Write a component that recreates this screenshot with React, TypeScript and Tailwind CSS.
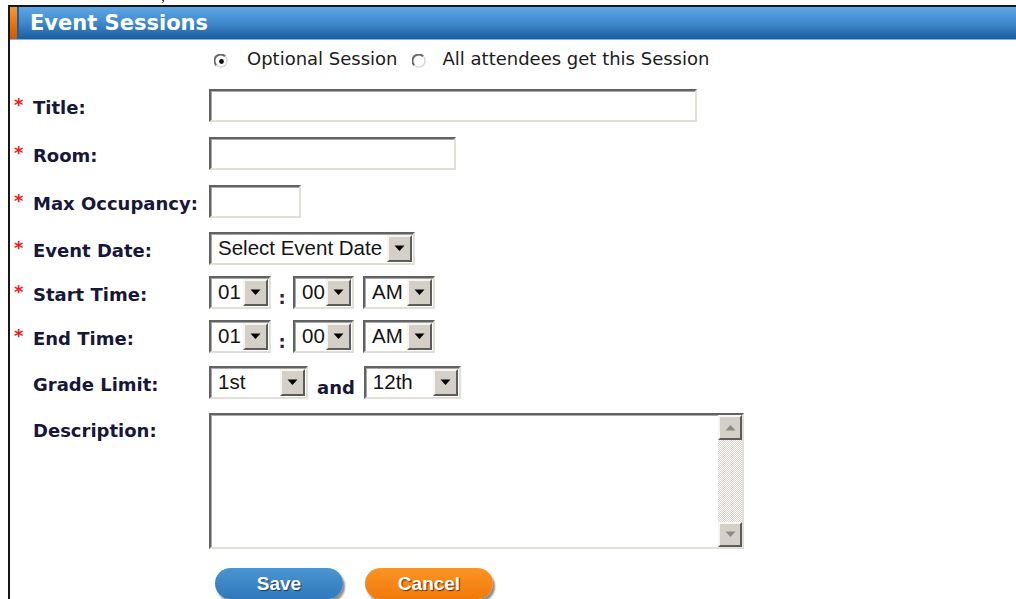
import React from "react";

const labelFont = "font-['DejaVu_Sans','Verdana',sans-serif]";
const inset =
  "border-t-2 border-l-2 border-b-2 border-r-2 border-t-[#626262] border-l-[#626262] border-b-[#e2dfd8] border-r-[#e2dfd8] shadow-[inset_1px_1px_0_#a9a9a9]";
const raised =
  "border-t-2 border-l-2 border-b-2 border-r-2 border-t-[#f6f5f2] border-l-[#f6f5f2] border-b-[#5c5c5c] border-r-[#5c5c5c] bg-[#d4d0c8]";

function Label({ text, required }: { text: string; required?: boolean }) {
  return (
    <div
      className={`w-[199px] shrink-0 pl-[4px] pt-[5px] flex items-center leading-none ${labelFont} font-bold text-[18px] text-[#17173a]`}
    >
      <span className="w-[19px] text-[#ff1414] -translate-y-[3px]">{required ? "*" : ""}</span>
      <span>{text}</span>
    </div>
  );
}

function Arrow({ up, color }: { up?: boolean; color: string }) {
  return (
    <svg width="11" height="7" viewBox="0 0 11 7" className="block">
      {up ? (
        <polygon points="0.5,6.5 10.5,6.5 5.5,1" fill={color} />
      ) : (
        <polygon points="0.5,0.5 10.5,0.5 5.5,6" fill={color} />
      )}
    </svg>
  );
}

function Select({ width, value }: { width: string; value: string }) {
  return (
    <div className={`${width} h-[33px] shrink-0 flex bg-white ${inset}`}>
      <div className="flex-1 pl-[7px] flex items-center font-['Liberation_Sans',Arial,sans-serif] text-[20.5px] leading-none text-[#141414] overflow-hidden whitespace-nowrap">
        {value}
      </div>
      <div className={`w-[25px] shrink-0 my-[1px] mr-[1px] flex items-center justify-center ${raised}`}>
        <Arrow color="#000" />
      </div>
    </div>
  );
}

function TextBox({ width }: { width: string }) {
  return <div className={`${width} h-[33px] shrink-0 bg-white ${inset}`} />;
}

// classic sunken radio: dark upper-left arc, light lower-right arc
function Radio({ checked }: { checked?: boolean }) {
  return (
    <svg width="15" height="15" viewBox="0 0 15 15" className="block shrink-0 mt-[5px]">
      <circle cx="7.5" cy="7.5" r="6" fill="#fff" />
      <path d="M2.3 11.2 A6 6 0 0 1 11.2 2.3" fill="none" stroke="#6a6a6a" strokeWidth="2" />
      <path d="M11.2 2.3 A6 6 0 0 1 2.3 11.2" fill="none" stroke="#d8d8d8" strokeWidth="1.6" />
      {checked && <circle cx="7.5" cy="7.5" r="2.4" fill="#111" />}
    </svg>
  );
}

export default function App() {
  return (
    <div className="w-[1016px] h-[599px] overflow-hidden bg-white">
      {/* tail of the line above the panel, clipped by the panel's top edge */}
      <div className="h-[5px] overflow-hidden pl-[161px]">
        <div className="-mt-[12px] font-['Liberation_Serif',serif] text-[16px] leading-[16px] text-[#222]">,</div>
      </div>

      <div className="ml-[8px] h-[594px] border-l-2 border-t-2 border-[#171717]">
        {/* panel title bar */}
        <div className="h-[33px] flex border-b border-[#7db6e6] bg-gradient-to-b from-[#5fa7e4] via-[#3f89cc] to-[#1a5e9e]">
          <div className="w-[7px] bg-gradient-to-b from-[#f29a38] via-[#e97514] to-[#c95a06]" />
          <div className="w-[2px] bg-[#245f92]" />
          <div className="pl-[11px] flex items-center font-['DejaVu_Sans','Tahoma',sans-serif] font-bold text-[21px] leading-none text-white">
            Event Sessions
          </div>
        </div>

        {/* session type */}
        <div className={`mt-[8px] h-[22px] pl-[204px] flex items-center ${labelFont} text-[18px] leading-none text-[#202020]`}>
          <Radio checked />
          <span className="ml-[18px]">Optional Session</span>
          <div className="ml-[14px]">
            <Radio />
          </div>
          <span className="ml-[16px]">All attendees get this Session</span>
        </div>

        <div className="mt-[19px] flex items-center">
          <Label text="Title:" required />
          <TextBox width="w-[488px]" />
        </div>

        <div className="mt-[15px] flex items-center">
          <Label text="Room:" required />
          <TextBox width="w-[247px]" />
        </div>

        <div className="mt-[15px] flex items-center">
          <Label text="Max Occupancy:" required />
          <TextBox width="w-[92px]" />
        </div>

        <div className="mt-[14px] flex items-center">
          <Label text="Event Date:" required />
          <Select width="w-[206px]" value="Select Event Date" />
        </div>

        <div className="mt-[11px] flex items-center">
          <Label text="Start Time:" required />
          <Select width="w-[62px]" value="01" />
          <span className={`w-[22px] pt-[10px] text-center ${labelFont} font-bold text-[18px] leading-none text-[#3a1a40]`}>:</span>
          <Select width="w-[61px]" value="00" />
          <div className="w-[9px]" />
          <Select width="w-[72px]" value="AM" />
        </div>

        <div className="mt-[11px] flex items-center">
          <Label text="End Time:" required />
          <Select width="w-[62px]" value="01" />
          <span className={`w-[22px] pt-[10px] text-center ${labelFont} font-bold text-[18px] leading-none text-[#3a1a40]`}>:</span>
          <Select width="w-[61px]" value="00" />
          <div className="w-[9px]" />
          <Select width="w-[72px]" value="AM" />
        </div>

        <div className="mt-[13px] flex items-center">
          <Label text="Grade Limit:" />
          <Select width="w-[99px]" value="1st" />
          <span className={`px-[9px] pt-[10px] ${labelFont} font-bold text-[18px] leading-none text-[#17173a]`}>and</span>
          <Select width="w-[97px]" value="12th" />
        </div>

        <div className="mt-[14px] flex items-start">
          <div className="pt-[4px]">
            <Label text="Description:" />
          </div>
          <div className={`w-[535px] h-[136px] bg-white flex justify-end ${inset}`}>
            <div className="w-[24px] flex flex-col">
              <div className={`h-[25px] flex items-center justify-center ${raised}`}>
                <Arrow up color="#8a8a8a" />
              </div>
              <div className="flex-1 bg-[repeating-conic-gradient(#d4d0c8_0_25%,#ffffff_0_50%)] bg-[length:2px_2px]" />
              <div className={`h-[25px] flex items-center justify-center ${raised}`}>
                <Arrow color="#8a8a8a" />
              </div>
            </div>
          </div>
        </div>

        {/* actions */}
        <div className="mt-[19px] pl-[205px] flex gap-[22px] font-['Liberation_Sans',Arial,sans-serif] font-bold text-[19px] leading-none text-white">
          <button className="w-[128px] h-[31px] rounded-full bg-gradient-to-b from-[#4b95d3] to-[#2f78bb] shadow-[2px_3px_2px_rgba(0,0,0,0.45)] [text-shadow:1px_1px_1px_#123a5e]">
            Save
          </button>
          <button className="w-[128px] h-[31px] rounded-full bg-gradient-to-b from-[#fb9424] to-[#f07a06] shadow-[2px_3px_2px_rgba(0,0,0,0.45)] [text-shadow:1px_1px_1px_#6a3000]">
            Cancel
          </button>
        </div>
      </div>
    </div>
  );
}
